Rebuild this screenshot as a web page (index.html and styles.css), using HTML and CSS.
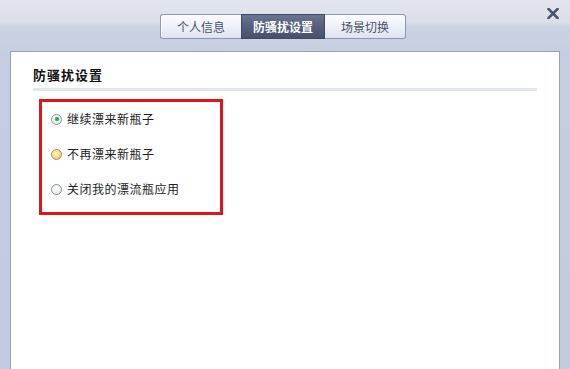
FILE: index.html
```html
<!DOCTYPE html>
<html lang="zh-CN">
<head>
<meta charset="utf-8">
<title>防骚扰设置</title>
<link rel="stylesheet" href="styles.css">
</head>
<body>
<div class="window">
  <div class="header">
    <div class="tabs">
      <div class="tab tab-first">个人信息</div>
      <div class="tab tab-active">防骚扰设置</div>
      <div class="tab tab-last">场景切换</div>
    </div>
    <div class="close">
      <svg width="12" height="11" viewBox="0 0 12 11"><path d="M1.5 1 L10.5 10 M10.5 1 L1.5 10" stroke="#4b5572" stroke-width="2.6" stroke-linecap="square"/></svg>
    </div>
  </div>
  <div class="panel">
    <div class="title">防骚扰设置</div>
    <div class="divider"></div>
    <div class="options">
      <div class="option"><span class="radio radio-checked"></span><span class="label">继续漂来新瓶子</span></div>
      <div class="option"><span class="radio radio-hover"></span><span class="label">不再漂来新瓶子</span></div>
      <div class="option"><span class="radio"></span><span class="label">关闭我的漂流瓶应用</span></div>
    </div>
  </div>
</div>
</body>
</html>
```

FILE: styles.css
```css
html, body {
  margin: 0;
  padding: 0;
}
body {
  font-family: "Noto Sans CJK SC", "Noto Sans", sans-serif;
  font-size: 12px;
  color: #222;
}
.window {
  width: 570px;
  height: 369px;
  display: flex;
  flex-direction: column;
  background: linear-gradient(to bottom, #e3e6ee 0px, #dcdfe8 22px, #cbd2e3 27px, #c6cde0 60px, #c4cbdf 100%);
  overflow: hidden;
}
.header {
  position: relative;
  height: 51px;
  flex: none;
}
.tabs {
  display: flex;
  margin-left: 160px;
  padding-top: 14px;
}
.tab {
  height: 23px;
  line-height: 23px;
  text-align: center;
  border: 1px solid #8c97b3;
  background: linear-gradient(to bottom, #fbfcfe 0%, #eef1f8 50%, #dde3f1 100%);
  color: #4a5068;
  font-size: 12px;
}
.tab-first {
  width: 80px;
  border-radius: 3px 0 0 3px;
  border-right: none;
  box-shadow: inset 1px 0 0 #fff;
}
.tab-active {
  width: 82px;
  border-color: #3f4963;
  background: linear-gradient(to bottom, #6a7591 0%, #56617e 45%, #46516c 100%);
  color: #fff;
  font-weight: bold;
}
.tab-last {
  width: 80px;
  border-left: none;
  border-radius: 0 3px 3px 0;
}
.close {
  position: absolute;
  top: 8px;
  right: 11px;
  width: 12px;
  height: 11px;
}
.close svg {
  display: block;
}
.panel {
  flex: 1;
  margin: 0 10px;
  background: #fff;
  border: 1px solid #98a1b6;
  border-bottom: none;
  padding: 14px 22px 0 22px;
}
.title {
  font-size: 13px;
  font-weight: bold;
  letter-spacing: 1px;
  line-height: 17px;
  color: #111;
}
.divider {
  height: 3px;
  margin-top: 5px;
  background: #e1e6ee;
}
.options {
  width: 169px;
  margin: 8px 0 0 6px;
  border: 3px solid #e0141a;
  padding: 7px 0 13px 9px;
  display: flex;
  flex-direction: column;
  gap: 15px;
}
.option {
  display: flex;
  align-items: center;
  height: 20px;
  gap: 5px;
}
.radio {
  width: 9px;
  height: 9px;
  border-radius: 50%;
  border: 1px solid #8791a8;
  background: radial-gradient(circle at 40% 35%, #ffffff 0%, #f1f3f7 50%, #d6dbe5 100%);
  position: relative;
  flex: none;
}
.radio-checked::after {
  content: "";
  position: absolute;
  left: 2.5px;
  top: 2.5px;
  width: 4px;
  height: 4px;
  border-radius: 50%;
  background: #2fa84a;
  box-shadow: 0 0 1px #7dd08c;
}
.radio-hover {
  border-color: #b8923a;
  background: radial-gradient(circle at 45% 40%, #fff6d6 0%, #f6d98a 55%, #e3b452 100%);
}
.label {
  font-size: 12px;
  letter-spacing: 0.5px;
  line-height: 20px;
  color: #222;
}
```
